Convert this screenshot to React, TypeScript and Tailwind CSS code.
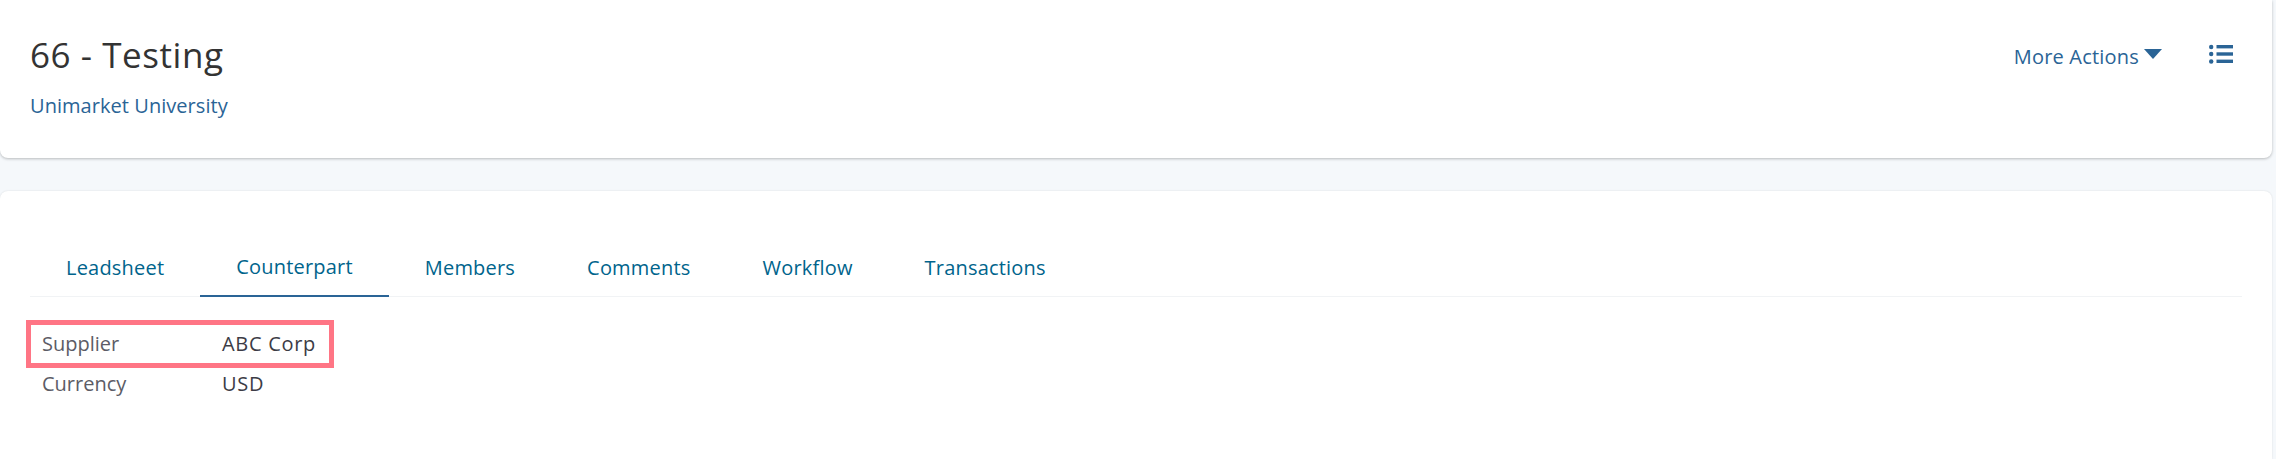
export default function App() {
  const tabs = ["Leadsheet", "Counterpart", "Members", "Comments", "Workflow", "Transactions"];
  return (
    <div className="flex h-[459px] flex-col overflow-hidden bg-[#f5f8fb] pr-[4px] font-['Open_Sans','Noto_Sans',sans-serif]">
      <header className="flex h-[158px] shrink-0 justify-between rounded-b-[8px] bg-white pl-[30px] pr-[39px] shadow-[0_1px_3px_rgba(0,0,0,0.25)]">
        <div className="pt-[32px]">
          <h1 className="text-[35px] leading-[46px] tracking-[0.55px] text-[#333333]">66 - Testing</h1>
          <a className="mt-[14px] block text-[20px] leading-[28px] tracking-[0.05px] text-[#2a6496]">Unimarket University</a>
        </div>
        <div className="flex h-[56px] items-center pt-[57px]">
          <a className="text-[20px] leading-[28px] tracking-[0.2px] text-[#2a6496]">More Actions</a>
          <svg className="ml-[5px] mb-[6px]" width="18" height="10" viewBox="0 0 18 10" fill="#2a6496">
            <path d="M0 0h18L9 10z" />
          </svg>
          <svg className="ml-[47px] mb-[6px]" width="24" height="20" viewBox="0 0 24 20" fill="#2a6496">
            <circle cx="2.2" cy="3" r="2.2" />
            <circle cx="2.2" cy="10" r="2.2" />
            <circle cx="2.2" cy="17.5" r="2.2" />
            <rect x="7.5" y="1" width="16.5" height="3.4" />
            <rect x="7.5" y="8.3" width="16.5" height="3.4" />
            <rect x="7.5" y="15.6" width="16.5" height="3.4" />
          </svg>
        </div>
      </header>
      <main className="mt-[33px] flex-1 rounded-t-[8px] bg-white px-[30px] pt-[52px] shadow-[0_0_2px_rgba(0,0,0,0.12)]">
        <nav className="flex h-[54px] border-b border-[#f1f3f5]">
          {tabs.map((t, i) => (
            <a
              key={t}
              className={`flex h-[54px] items-center px-[36px] pb-[4px] text-[20px] tracking-[0.2px] text-[#00648c] ${i === 1 ? "border-b-2 border-[#2a6496]" : ""}`}
            >
              {t}
            </a>
          ))}
        </nav>
        <dl className="pt-[23px] text-[20px]">
          <div className="relative flex h-[40px] items-center pl-[12px] pt-[8px]">
            <dt className="w-[180px] text-[#5c5c66]">Supplier</dt>
            <dd className="tracking-[0.7px] text-[#3c3c46]">ABC Corp</dd>
            <span className="absolute left-[-4px] top-[0px] h-[48px] w-[308px] border-[5px] border-[#ff7585]" />
          </div>
          <div className="flex h-[40px] items-center pl-[12px] pt-[8px]">
            <dt className="w-[180px] text-[#5c5c66]">Currency</dt>
            <dd className="tracking-[0.7px] text-[#3c3c46]">USD</dd>
          </div>
        </dl>
      </main>
    </div>
  );
}
